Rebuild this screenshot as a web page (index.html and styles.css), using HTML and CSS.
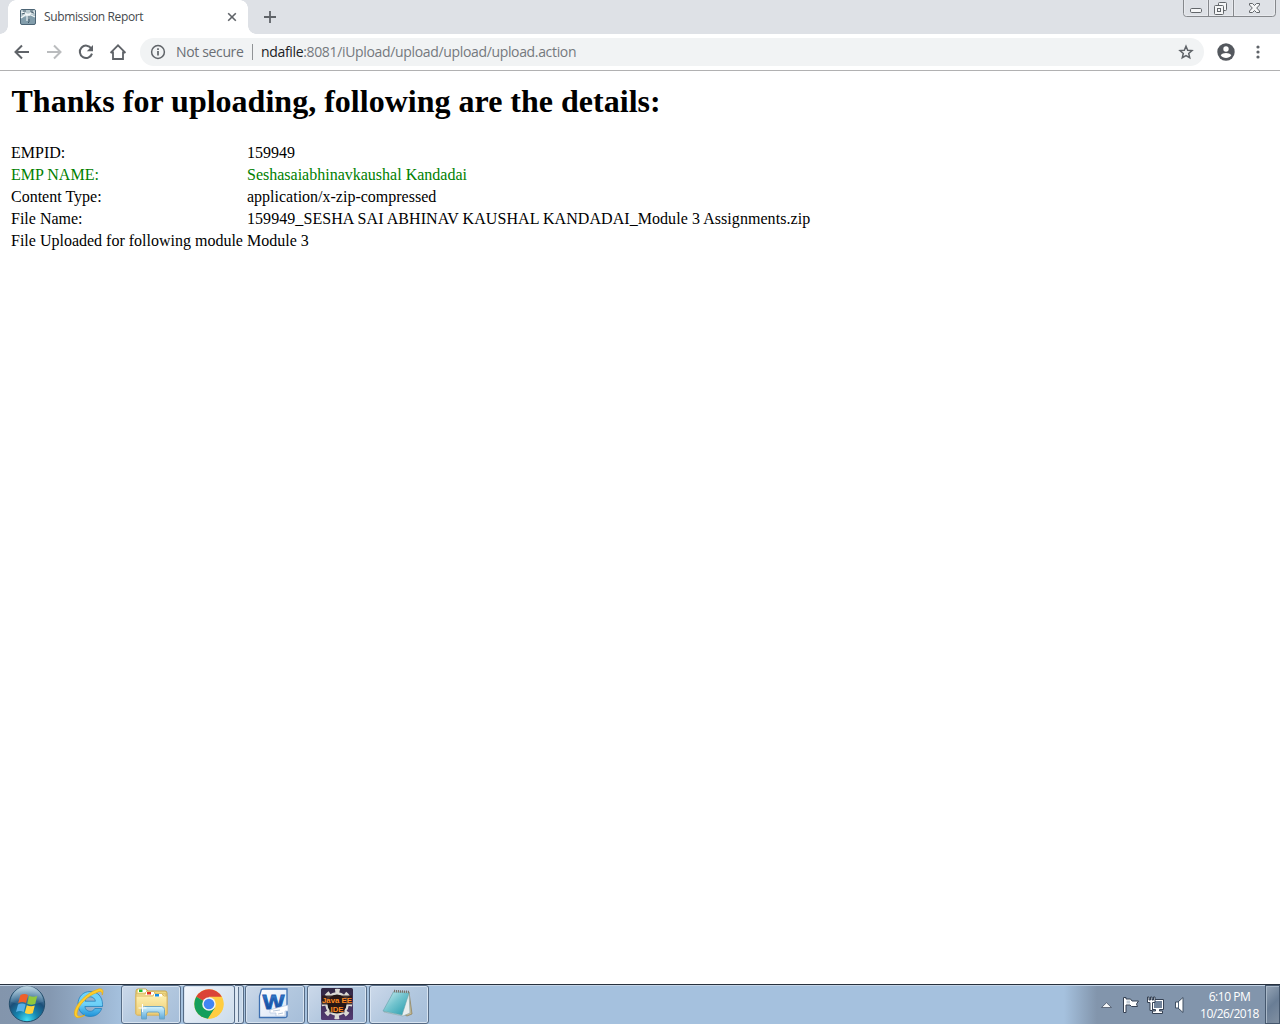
FILE: index.html
```html
<!DOCTYPE html>
<html lang="en">
<head>
<meta charset="utf-8">
<title>Submission Report</title>
<link rel="stylesheet" href="styles.css">
</head>
<body>
<header class="tabstrip">
  <div class="tab">
    <svg class="favicon" width="16" height="16" viewBox="0 0 16 16"><rect x=".5" y=".5" width="15" height="15" rx="1.5" fill="#829dab" stroke="#4d6575"/><path d="M1 1h14v6l-5-2-3 2-6 2z" fill="#b9c9cf"/><path d="M1 3l4 1 3 2 3-2 4-1M1 9l4-3 3-1 3 1 4 2M7 5v7M9 5v5" fill="none" stroke="#f4f8f9" stroke-width="1.1"/><path d="M2 5l3-1M11 3l3 1M9 7v6l-1 1M3 2h3M10 2h3" fill="none" stroke="#3d5362" stroke-width=".9"/></svg>
    <span class="tab-title">Submission Report</span>
    <svg class="tab-close" width="10" height="10" viewBox="0 0 10 10"><path d="M1.2 1.2l7.6 7.6M8.8 1.2L1.2 8.8" stroke="#5f6368" stroke-width="1.6"/></svg>
  </div>
  <svg class="new-tab" width="12" height="12" viewBox="0 0 12 12"><path d="M6 0v12M0 6h12" stroke="#5f6368" stroke-width="1.8"/></svg>
  <div class="window-controls">
    <svg width="94" height="18" viewBox="0 0 94 18"><path d="M.5 0v13.5a3 3 0 0 0 3 3h86a3 3 0 0 0 3-3V0M25.500 0v16.500M50.500 0v16.500" fill="none" stroke="#85888c"/><path d="M1.500 0v13a2 2 0 0 0 2 2.500h21V0M26.500 0v15.500h23V0M51.500 0v15.500h37a3 3 0 0 0 3-3V0" fill="none" stroke="#eceef1" stroke-opacity=".7"/><g fill="#f5f6f7" stroke="#62666a"><rect x="7.500" y="8.500" width="11" height="4" rx="1.200"/><rect x="35.500" y="2.500" width="8" height="8" rx="1"/><rect x="31.500" y="5.500" width="9" height="9" rx="1"/><rect x="34.500" y="8.500" width="3" height="3"/><path d="M66.500 3.500h3l2 2 2-2h3v1.500l-2.800 3 2.800 3v1.500h-3l-2-2-2 2h-3V11l2.800-3-2.800-3z"/></g></svg>
  </div>
</header>
<nav class="toolbar">
  <div class="nav-icons">
    <svg width="20" height="20" viewBox="0 0 20 20"><path d="M17 10H4M10 3.500L3.500 10l6.500 6.500" fill="none" stroke="#5f6368" stroke-width="2"/></svg>
    <svg width="20" height="20" viewBox="0 0 20 20"><path d="M3 10h13M10 3.500l6.500 6.500-6.500 6.500" fill="none" stroke="#babcbe" stroke-width="2"/></svg>
    <svg width="20" height="20" viewBox="0 0 20 20"><path d="M15.300 6.500A6.200 6.200 0 1 0 16 11.600" fill="none" stroke="#5f6368" stroke-width="2"/><path d="M17 3v6.200h-6.200z" fill="#5f6368"/></svg>
    <svg width="20" height="20" viewBox="0 0 20 20"><path d="M5 9.500v7.500h10V9.500M2.500 10.800L10 3.300l7.500 7.500M2.800 10.500H5M15 10.500h2.200" fill="none" stroke="#5f6368" stroke-width="1.800"/></svg>
  </div>
  <div class="omnibox">
    <svg class="info" width="16" height="16" viewBox="0 0 16 16"><circle cx="8" cy="8" r="6.400" fill="none" stroke="#5f6368" stroke-width="1.500"/><path d="M8 7v4.500M8 4.300v1.600" stroke="#5f6368" stroke-width="1.700"/></svg>
    <span class="security">Not secure</span>
    <span class="divider"></span>
    <span class="url"><span class="host">ndafile</span>:8081/iUpload/upload/upload/upload.action</span>
    <svg class="star" width="16" height="16" viewBox="0 0 16 16"><path d="M8 2.200l1.700 4 4.300.4-3.300 2.900 1 4.200L8 11.500l-3.700 2.200 1-4.200L2 6.600l4.300-.4z" fill="none" stroke="#5f6368" stroke-width="1.500"/></svg>
  </div>
  <svg class="profile" width="18" height="18" viewBox="0 0 18 18"><circle cx="9" cy="9" r="8.700" fill="#54585e"/><circle cx="9" cy="6" r="2.700" fill="#fff"/><path d="M3.700 12.300c1-1.500 3.200-2.300 5.300-2.300s4.300.8 5.300 2.300a6.400 6.400 0 0 1-10.600 0z" fill="#fff"/></svg>
  <svg class="menu" width="4" height="14" viewBox="0 0 4 14"><g fill="#5f6368"><circle cx="2" cy="2" r="1.600"/><circle cx="2" cy="7" r="1.600"/><circle cx="2" cy="12" r="1.600"/></g></svg>
</nav>
<main class="page">
  <h1>Thanks for uploading, following are the details:</h1>
  <dl class="details">
    <dt>EMPID:</dt><dd>159949</dd>
    <dt class="name">EMP NAME:</dt><dd class="name">Seshasaiabhinavkaushal Kandadai</dd>
    <dt>Content Type:</dt><dd>application/x-zip-compressed</dd>
    <dt>File Name:</dt><dd class="filename">159949_SESHA SAI ABHINAV KAUSHAL KANDADAI_Module 3 Assignments.zip</dd>
    <dt>File Uploaded for following module</dt><dd>Module 3</dd>
  </dl>
</main>
<footer class="taskbar">
  <div class="start"><svg width="38" height="38" viewBox="0 0 38 38">
    <defs><radialGradient id="orb" cx=".5" cy=".95" r=".85"><stop offset="0" stop-color="#42e0f5"/><stop offset=".35" stop-color="#1686b0"/><stop offset=".7" stop-color="#1c4f79"/><stop offset="1" stop-color="#6f98b4"/></radialGradient><linearGradient id="shine" x2="0" y2="1"><stop stop-color="#d4e5ee" stop-opacity=".8"/><stop offset="1" stop-color="#6293b6" stop-opacity=".2"/></linearGradient></defs>
    <circle cx="19" cy="19" r="17.700" fill="url(#orb)" stroke="#244e6c"/><path d="M3 17a16 16 0 0 1 32 0q-16 5-32 0" fill="url(#shine)"/>
    <path d="M12.500 10q4-2 7.500 0l-2 8q-3.700-2-7.800 0z" fill="#ee602b"/><path d="M21 10.700q4 2 8.200.3l-2 8q-4 1.700-8-.3z" fill="#91c83d"/><path d="M10 19.500q4-2 7.700 0l-2 7.600q-3.700-2-7.700 0z" fill="#57b0e8"/><path d="M18.800 20.200q4 2 8 .3l-2 7.700q-4 1.700-8-.3z" fill="#ffd23d"/></svg></div>
  <div class="ie"><svg width="32" height="32" viewBox="0 0 32 32">
    <defs><linearGradient id="ieb" x2="0" y2="1"><stop stop-color="#70d4fa"/><stop offset=".5" stop-color="#70d1f8"/><stop offset="1" stop-color="#1d91d8"/></linearGradient></defs>
    <path d="M29.500 16.500c0-8-5-13-12.500-13C10 3.500 5 9 5 16s5 12.500 12 12.500c6 0 10-3.200 11.700-8h-6.900c-1 1.900-2.600 2.800-4.700 2.800-3 0-5-2-5.200-4.800h17.600zM12 13.200c.5-2.600 2.400-4.400 5.200-4.400s4.700 1.800 5.200 4.400z" fill="url(#ieb)" stroke="#2582bd" stroke-width=".8"/>
    <path d="M24 4.500c3-2 5.700-1.400 5.200 2.500 2.300-5.500-.5-7.800-6.200-5C12 6 .5 18.500 1.500 26.500 2.300 32 8.500 29 12 27c-4.500 2-8.500 2-8-2C5 17 15 7.500 24 4.500z" fill="#ffcd2e" stroke="#eda900" stroke-width=".6"/></svg></div>
  <div class="task explorer"><svg width="34" height="32" viewBox="0 0 34 32">
    <defs><linearGradient id="fold" x2="0" y2="1"><stop stop-color="#fff3b5"/><stop offset="1" stop-color="#eccb73"/></linearGradient><linearGradient id="stand" x2="0" y2="1"><stop stop-color="#d5f5ff"/><stop offset="1" stop-color="#5ba7d8"/></linearGradient></defs>
    <path d="M2 3q0-2 2-2h8l2 2h17q2 0 2 2v20q0 2-2 2H4q-2 0-2-2z" fill="#eed883" stroke="#c8a64d"/><path d="M4 1.500h8v3H4z" fill="#fff"/><path d="M5 1.500h3.500v2.500H5z" fill="#1cba30"/><path d="M2 6h9l1-2h8l2 2h10v20H2z" fill="url(#fold)" stroke="#d7b761"/><path d="M12 4h8v3h-8z" fill="#fff"/><path d="M13 4h4v2.500h-4z" fill="#e43423"/><path d="M2 8h17l1-2h8l2 2h3v18q0 1-1 1H3q-1 0-1-1z" fill="url(#fold)" stroke="#ddb965"/><path d="M20 6h8v2.500h-8z" fill="#fff"/><path d="M21 6h4v2.500h-4z" fill="#148de4"/>
    <path d="M7.500 31V21.500q0-3 3-3h17q3 0 3 3V31h-5v-5q0-2-2-2h-9q-2 0-2 2v5z" fill="url(#stand)" stroke="#70a7c4"/><path d="M8.500 16v8M4.500 20h8" stroke="#fff" stroke-width="1.100"/></svg></div>
  <div class="task chrome"><svg width="30" height="30" viewBox="0 0 30 30">
    <circle cx="15" cy="15" r="14.700" fill="#ffcd40"/><path d="M15 15L2.270 7.650A14.700 14.700 0 0 1 27.730 7.650H15z" fill="#db4437"/><path d="M2.270 7.650A14.700 14.700 0 0 0 14 29.660L21.400 18.700 15 15z" fill="#159f5c"/><path d="M15 8.300h12.730A14.700 14.700 0 0 1 14 29.660l7-11z" fill="#ffcd40"/><circle cx="15" cy="15" r="6.800" fill="#f3f3f3"/><circle cx="15" cy="15" r="5.300" fill="#4285f4"/></svg></div>
  <div class="task stack"></div>
  <div class="task word"><svg width="32" height="32" viewBox="0 0 32 32">
    <defs><linearGradient id="word" x2="0" y2="1"><stop stop-color="#4d97e0"/><stop offset=".5" stop-color="#1d5cb0"/><stop offset="1" stop-color="#164b9a"/></linearGradient><linearGradient id="paper" x2="1" y2="1"><stop stop-color="#fff"/><stop offset="1" stop-color="#d5e2f4"/></linearGradient></defs>
    <path d="M3 3q0-2 2-2h24v27q0 1.500-2 1.500H1.500V8z" fill="url(#paper)" stroke="#3e70b1" stroke-width="1.300"/>
    <text class="word-mark" x="4.500" y="21" textLength="22" lengthAdjust="spacingAndGlyphs">W</text>
    <path d="M15 21l15-4v6h-3v5h-9v-3h-6v-3z" fill="#fff" stroke="#b1c4df" stroke-width=".7"/><path d="M15 23l7-1M20 26l5-1" stroke="#b8c8dc"/></svg></div>
  <div class="task java"><svg width="32" height="32" viewBox="0 0 32 32">
    <defs><linearGradient id="eclipse" x2="0" y2="1"><stop stop-color="#302642"/><stop offset="1" stop-color="#533a72"/></linearGradient></defs><rect width="32" height="32" rx="1.500" fill="url(#eclipse)"/><circle cx="16" cy="16" r="13" fill="none" stroke="#dad9d4" stroke-width="4.500" stroke-dasharray="4.500 5.710" stroke-dashoffset="2.250"/><circle cx="16" cy="16" r="10.700" fill="#171519" stroke="#dad9d4" stroke-width="2.200"/><path d="M1 7.500h30v9H23.500v8h-15v-8H1z" fill="#2c1715" opacity=".85"/><g class="java-label"><text x="1" y="15" textLength="30" lengthAdjust="spacingAndGlyphs">Java EE</text><text x="9.500" y="23.500" textLength="13" lengthAdjust="spacingAndGlyphs">IDE</text></g></svg></div>
  <div class="task notepad"><svg width="32" height="32" viewBox="0 0 32 32">
    <defs><linearGradient id="note" x1="0" x2="1" y2="1"><stop stop-color="#d3f0f3"/><stop offset=".45" stop-color="#75c5cf"/><stop offset="1" stop-color="#229aac"/></linearGradient></defs><path d="M27 4l3 22-5 2-5-3z" fill="#c9b98c" stroke="#887b57" stroke-width=".7"/><path d="M12 3l15 1 1 21-7 3-19-4z" fill="#e9eeee" stroke="#8ca6aa" stroke-width=".7"/><path d="M11.500 4L27 5l-7 22L1 23z" fill="url(#note)" stroke="#63a1aa" stroke-width=".6"/><path d="M12 3l15 1" stroke="#76716a" stroke-width="2.500" stroke-dasharray="1 1"/></svg></div>
  <div class="tray">
    <svg width="90" height="24" viewBox="0 0 90 24"><path d="M3.500 14.500L8.500 9.700l5 4.800z" fill="#f7f9fb" stroke="#4a5667" stroke-width=".8"/><path d="M25.500 4.500h2.500v1.500h4.500l1.500 2h6.500l-2 3 1 2.500h-6l-1.500-1.500h-4v7.500h-2.500z" fill="#fff" stroke="#354153"/><path d="M28.500 7.500h3.500v3h-3.500z" fill="#c1ccd8"/><path d="M53.500 6.500h12v10h-4v1.500h3v2.500h-10v-2.500h3v-1.500h-4z" fill="#fff" stroke="#354153"/><path d="M56 8h8v7h-8z" fill="#71839a"/><path d="M49.500 4h1.500v3h1.500V4h1.500v3h1.500V4H57v5.500h-2.500v8H52v-8h-2.500z" fill="#fff" stroke="#354153"/><path d="M77.500 9h2.500L85 4.500v15l-5-4.500h-2.500z" fill="#fff" stroke="#405063"/><path d="M80.500 9v6" stroke="#52657a"/></svg>
    <div class="clock"><span class="time">6:10 PM</span><span class="date">10/26/2018</span></div>
  </div>
  <div class="show-desktop"></div>
</footer>
</body>
</html>
```
FILE: styles.css
```css
* { box-sizing: border-box; }
body { margin: 0; width: 1280px; height: 1024px; display: flex; flex-direction: column; overflow: hidden; background: #fff; font-family: "Open Sans", sans-serif; }
svg { display: block; flex-shrink: 0; }
span { white-space: nowrap; }
.tabstrip { height: 34px; display: flex; align-items: flex-start; background: #dee1e6; flex-shrink: 0; }
.tab { width: 256px; height: 34px; display: flex; align-items: center; padding-left: 20px; background: radial-gradient(circle at 0 0, transparent 7.500px, #fff 8px) 0 26px / 8px 8px no-repeat, radial-gradient(circle at 100% 0, transparent 7.500px, #fff 8px) 248px 26px / 8px 8px no-repeat, radial-gradient(circle at 8px 8px, #fff 7.500px, transparent 8px) 8px 0 / 8px 8px no-repeat, radial-gradient(circle at 0 8px, #fff 7.500px, transparent 8px) 240px 0 / 8px 8px no-repeat, linear-gradient(#fff, #fff) 16px 0 / 224px 34px no-repeat, linear-gradient(#fff, #fff) 8px 8px / 240px 26px no-repeat; }
.tab-title { margin-left: 8px; width: 183px; font-size: 12px; letter-spacing: -.37px; color: #45494d; line-height: 18px; }
.new-tab { margin: 11px 0 0 8px; }
.window-controls { margin: 0 3px 0 auto; }
.toolbar { height: 37px; flex-shrink: 0; border-bottom: 1px solid #b1b1b2; display: flex; align-items: center; background: #fff; }
.nav-icons { display: flex; gap: 12px; padding-left: 12px; width: 140px; flex-shrink: 0; }
.omnibox { width: 1064px; height: 28px; border-radius: 14px; background: #f1f3f4; display: flex; align-items: center; padding: 0 10px; font-size: 14px; color: #6b6f74; flex-shrink: 0; }
.security { width: 76px; margin-left: 10px; letter-spacing: -.35px; padding-bottom: 1px; }
.divider { width: 1px; height: 16px; background: #909396; margin-right: 8px; }
.url { color: #75797e; letter-spacing: -.34px; padding-bottom: 1px; }
.host { color: #202124; }
.star { margin-left: auto; }
.profile { margin-left: 13px; }
.menu { margin-left: 21px; }
.page { flex: 1; padding: 12px 11px 0; font: 16px/22px "Liberation Serif", serif; color: #000; }
h1 { margin: 0 0 0 .5px; font-size: 32px; line-height: 37px; white-space: nowrap; letter-spacing: .01px; }
.details { margin: 22px 0 0; display: grid; grid-template-columns: 236px auto; grid-auto-rows: 22px; }
.details dt, .details dd { margin: 0; white-space: nowrap; }
.details .name { color: green; }
.details .filename { letter-spacing: .06px; }
.taskbar { height: 40px; flex-shrink: 0; display: flex; align-items: center; border-top: 1px solid #27313e; box-shadow: inset 0 1px #c3d3e5; background: linear-gradient(90deg, #8395ac 0, #8498b1 50px, #a5c1de 122px, #a5c1de 1064px, #8295ac 1097px, #8295ac); }
.start { width: 74px; padding-left: 8px; padding-bottom: 1px; }
.ie { width: 47px; padding-bottom: 2px; }
.ie svg { margin-left: -1px; }
.task { width: 60px; height: 39px; padding-bottom: 1px; display: flex; align-items: center; justify-content: center; border: 1px solid #576c86; border-radius: 3px; background: linear-gradient(135deg, #ccd9ea, #b3c8df 50%, #a6bed9); box-shadow: inset 0 0 0 1px #d8e4f1; margin-right: 2px; flex-shrink: 0; }
.chrome { width: 52px; margin-right: 0; background: linear-gradient(135deg, #f4f7fc, #dce6f2 55%, #cbdcec); }
.stack { width: 9px; margin: 0 1px 0 0; border-left: 0; border-radius: 0 3px 3px 0; background: linear-gradient(90deg, #dce7f3 3px, #60758e 3px 4px, #c7d8ea 4px); }
.word { padding-right: 3px; }
.word-mark { font: bold 21px "Liberation Sans", sans-serif; fill: url(#word); stroke: #1d5cb0; stroke-width: .8px; }
.notepad { padding-right: 2px; }
.java-label { font: bold 8px "Liberation Sans", sans-serif; fill: #ff8a21; }
.tray { height: 39px; margin-left: auto; display: flex; align-items: center; color: #fff; }
.clock { width: 69px; margin-left: 8px; padding-right: 2px; display: flex; flex-direction: column; align-items: center; font-size: 12px; line-height: 17px; letter-spacing: -.48px; }
.show-desktop { width: 15px; height: 39px; border: 1px solid #45576d; box-shadow: inset 1px 1px #a9b8c8; background: linear-gradient(135deg, #96a5b6, #697d95 50%, #8190a2); }
```
